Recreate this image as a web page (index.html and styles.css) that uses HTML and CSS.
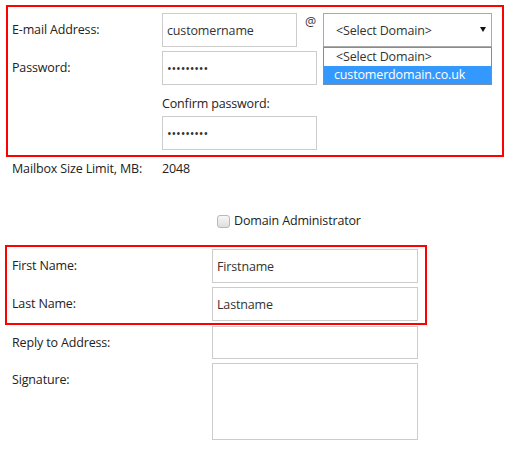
FILE: index.html
```html
<!DOCTYPE html>
<html lang="en">
<head>
  <meta charset="UTF-8">
  <meta name="viewport" content="width=device-width, initial-scale=1.0">
  <title>Mailbox Settings</title>
  <link rel="stylesheet" href="styles.css">
</head>
<body>
  <form class="mailbox-form">
    <div class="account highlight">
      <div class="row">
        <label class="label" for="email">E-mail Address:</label>
        <input type="text" id="email" class="field email-field" value="customername">
        <span class="at">@</span>
        <div class="domain">
          <select id="domain" class="domain-select">
            <option>&lt;Select Domain&gt;</option>
            <option>customerdomain.co.uk</option>
          </select>
          <span class="arrow"></span>
          <ul class="domain-list">
            <li>&lt;Select Domain&gt;</li>
            <li class="selected">customerdomain.co.uk</li>
          </ul>
        </div>
      </div>
      <div class="row">
        <label class="label" for="password">Password:</label>
        <input type="password" id="password" class="field pass-field" value="secret123">
      </div>
      <div class="confirm">
        <label class="confirm-label" for="confirm">Confirm password:</label>
        <input type="password" id="confirm" class="field pass-field" value="secret123">
      </div>
    </div>

    <div class="info-row">
      <span class="label">Mailbox Size Limit, MB:</span>
      <span>2048</span>
    </div>

    <div class="check-row">
      <input type="checkbox" id="admin" class="check">
      <label for="admin">Domain Administrator</label>
    </div>

    <div class="names highlight">
      <div class="row">
        <label class="label wide" for="first">First Name:</label>
        <input type="text" id="first" class="field name-field" value="Firstname">
      </div>
      <div class="row">
        <label class="label wide" for="last">Last Name:</label>
        <input type="text" id="last" class="field name-field" value="Lastname">
      </div>
    </div>

    <div class="extra">
      <div class="row reply">
        <label class="label wide" for="reply">Reply to Address:</label>
        <input type="text" id="reply" class="field name-field">
      </div>
      <div class="row signature">
        <label class="label wide" for="sig">Signature:</label>
        <textarea id="sig" class="field name-field sig-field"></textarea>
      </div>
    </div>
  </form>
</body>
</html>
```

FILE: styles.css
```css
body {
  margin: 0;
  padding: 5px 0 0 5px;
  font-family: "Open Sans", Arial, sans-serif;
  font-size: 12.5px;
  letter-spacing: -0.15px;
  line-height: 18px;
  color: #222;
  background: #fff;
}
.highlight {
  border: 2px solid #f00;
  box-sizing: border-box;
}
.row {
  display: flex;
  align-items: center;
  height: 34px;
}
.label {
  width: 150px;
  flex-shrink: 0;
}
.label.wide {
  width: 200px;
}
.field {
  box-sizing: border-box;
  height: 34px;
  border: 1px solid #ccc;
  padding: 0 4px;
  font: inherit;
  letter-spacing: inherit;
  color: #333;
  background: #fff;
  outline: none;
}
.email-field {
  width: 135px;
}
.pass-field {
  width: 155px;
}
.name-field {
  width: 206px;
}

/* top block */
.account {
  margin-left: 1px;
  width: 498px;
  padding: 6px 0 5px 4px;
}
.account .row + .row {
  margin-top: 4px;
}
.at {
  align-self: flex-start;
  width: 18px;
  padding-left: 8px;
  color: #333;
}
.domain {
  position: relative;
  width: 169px;
  height: 34px;
}
.domain-select {
  appearance: none;
  -webkit-appearance: none;
  width: 100%;
  height: 100%;
  box-sizing: border-box;
  border: 1px solid #a9a9a9;
  border-radius: 0;
  padding: 2px 30px 0 12px;
  font: inherit;
  letter-spacing: inherit;
  color: #333;
  background: #fff;
}
.arrow {
  position: absolute;
  right: 6px;
  top: 14px;
  border-top: 5px solid #111;
  border-left: 3px solid transparent;
  border-right: 3px solid transparent;
}
.domain-list {
  position: absolute;
  top: 34px;
  left: 0;
  right: 0;
  margin: 0;
  padding: 0;
  list-style: none;
  border: 1px solid #7a8ea6;
  background: #fff;
  color: #333;
}
.domain-list li {
  height: 18px;
  line-height: 17px;
  padding-left: 12px;
}
.domain-list li.selected {
  padding-left: 10px;
  background: #3399ff;
  color: #fff;
}
.confirm {
  margin-left: 150px;
}
.confirm-label {
  display: block;
  margin-top: 10px;
  margin-bottom: 3px;
}
.confirm .field {
  display: block;
}

/* plain rows */
.info-row {
  display: flex;
  margin: 3px 0 0 7px;
}
.check-row {
  display: flex;
  align-items: center;
  gap: 4px;
  margin: 34px 0 0 212px;
}
.check {
  appearance: none;
  -webkit-appearance: none;
  width: 13px;
  height: 13px;
  margin: 0;
  border: 1px solid #b8b8b8;
  border-radius: 3px;
  background: linear-gradient(#f7f7f7, #dedede);
}

/* name block */
.names {
  width: 422px;
  margin-top: 15px;
  padding: 2px 7px 2px 5px;
}
.names .row + .row {
  margin-top: 4px;
}
.extra {
  margin-left: 7px;
}
.reply {
  margin-top: 1px;
  height: 33px;
}
.reply .field {
  height: 33px;
}
.signature {
  align-items: flex-start;
  height: 77px;
  margin-top: 4px;
}
.signature .label {
  line-height: 34px;
}
.sig-field {
  height: 77px;
  resize: none;
}
```
